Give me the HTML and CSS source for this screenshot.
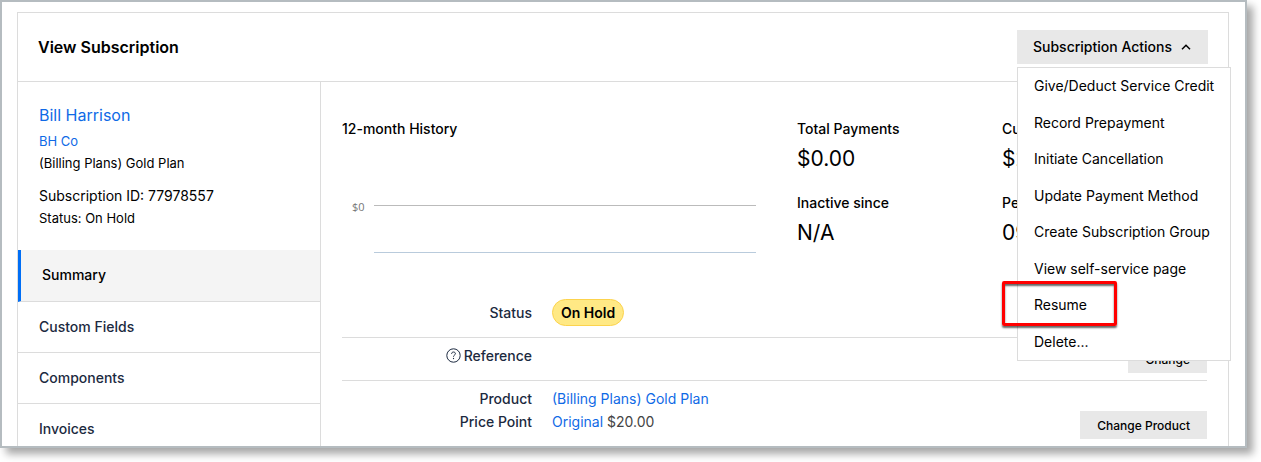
FILE: index.html
```
<!DOCTYPE html>
<html lang="en">
<head>
  <meta charset="UTF-8" />
  <meta name="viewport" content="width=device-width, initial-scale=1.0"/>
  <title>View Subscription</title>
  <link rel="stylesheet" href="styles.css">
</head>
<body>
  <div class="frame">
    <div class="panel">
      <header class="panel-header">
        <h1>View Subscription</h1>
        <div class="actions">
          <button type="button" class="actions-btn" aria-expanded="true">
            Subscription Actions
            <svg class="chevron" width="10" height="6" viewBox="0 0 10 6"><path d="M1 5.2 5 1.2 9 5.2" fill="none" stroke="#000" stroke-width="1.5"/></svg>
          </button>
          <ul class="actions-menu">
            <li><a href="#">Give/Deduct Service Credit</a></li>
            <li><a href="#">Record Prepayment</a></li>
            <li><a href="#">Initiate Cancellation</a></li>
            <li><a href="#">Update Payment Method</a></li>
            <li><a href="#">Create Subscription Group</a></li>
            <li><a href="#">View self-service page</a></li>
            <li class="highlighted"><a href="#">Resume</a></li>
            <li><a href="#">Delete...</a></li>
          </ul>
        </div>
      </header>

      <div class="panel-body">
        <aside class="sidebar">
          <div class="customer">
            <a href="#" class="customer-name">Bill Harrison</a>
            <a href="#">BH Co</a>
            <p>(Billing Plans) Gold Plan</p>
            <p class="subscription-id">Subscription ID: 77978557</p>
            <p>Status: On Hold</p>
          </div>
          <nav class="side-nav">
            <a href="#" class="active">Summary</a>
            <a href="#">Custom Fields</a>
            <a href="#">Components</a>
            <a href="#">Invoices</a>
          </nav>
        </aside>

        <main class="content">
          <!-- Overview -->
          <section class="overview">
            <div class="history">
              <h2>12-month History</h2>
              <div class="chart">
                <span class="axis-label">$0</span>
                <div class="plot"></div>
              </div>
            </div>
            <div class="metric">
              <h2>Total Payments</h2>
              <p>$0.00</p>
            </div>
            <div class="metric">
              <h2>Current MRR</h2>
              <p>$20.00</p>
            </div>
            <div class="metric">
              <h2>Inactive since</h2>
              <p>N/A</p>
            </div>
            <div class="metric">
              <h2>Period Ends</h2>
              <p>09/30</p>
            </div>
          </section>

          <!-- Details -->
          <section class="details">
            <div class="group status-group">
              <div class="row">
                <span class="label">Status</span>
                <span><span class="badge">On Hold</span></span>
              </div>
            </div>
            <div class="group">
              <div class="row">
                <span class="label">
                  <svg class="help" width="15" height="15" viewBox="0 0 15 15" fill="none" stroke="#1c2a40">
                    <circle cx="7.5" cy="7.5" r="6.7" stroke-width="1"/>
                    <path d="M5.6 5.9c0-1.2.8-1.9 1.9-1.9s1.9.7 1.9 1.7c0 1.4-1.9 1.4-1.9 3" stroke-width="1"/>
                    <path d="M7.5 9.9v1.2" stroke-width="1.1"/>
                  </svg>
                  Reference
                </span>
                <span></span>
                <button type="button" class="btn">Change</button>
              </div>
            </div>
            <div class="group">
              <div class="row">
                <span class="label">Product</span>
                <a href="#">(Billing Plans) Gold Plan</a>
              </div>
              <div class="row">
                <span class="label">Price Point</span>
                <span class="price"><a href="#">Original</a> $20.00</span>
                <button type="button" class="btn">Change Product</button>
              </div>
            </div>
          </section>
        </main>
      </div>
    </div>
  </div>
</body>
</html>
```

FILE: styles.css
```
*,
*::after {
  margin: 0;
  padding: 0;
  box-sizing: border-box;
}

body {
  min-height: 100vh;
  background: #fff;
  color: #000;
  font-family: Inter, "Liberation Sans", sans-serif;
  font-size: 14px;
  line-height: 22px;
}

a {
  color: #0f6ae6;
  text-decoration: none;
}

button {
  border: none;
  background: #e8e8e8;
  color: #000;
  font-family: inherit;
  font-weight: 500;
  cursor: pointer;
}

.frame {
  height: calc(100vh - 14px);
  margin-right: 14px;
  padding: 10px 16px 0 15px;
  border: 2px solid #b5bcc0;
  background: #fff;
  box-shadow: 6px 6px 8px rgba(0, 0, 0, 0.35);
  overflow: hidden;
}

.panel {
  border: 1px solid #dcdcdc;
}

/* Header */
.panel-header {
  display: flex;
  justify-content: space-between;
  align-items: center;
  padding: 17px 20px;
  border-bottom: 1px solid #dcdcdc;
}

h1 {
  font-size: 16px;
  font-weight: 600;
}

h2 {
  font-size: 14px;
  font-weight: 500;
  line-height: 20px;
}

.actions {
  position: relative;
}

.actions-btn {
  display: flex;
  align-items: center;
  gap: 9px;
  height: 34px;
  padding: 0 17px 0 16px;
  font-size: 14px;
  line-height: 22px;
}

.actions-menu {
  position: absolute;
  top: 37px;
  left: 0;
  z-index: 2;
  display: grid;
  width: 214px;
  min-height: 294px;
  border: 1px solid #dcdcdc;
  background: #fff;
  list-style: none;
}

.actions-menu li {
  display: flex;
  align-items: center;
  position: relative;
  padding: 0 16px;
}

.actions-menu a {
  color: #000;
  white-space: nowrap;
}

.highlighted::after {
  content: "";
  position: absolute;
  top: -6px;
  left: -16px;
  width: 115px;
  height: 45px;
  border: 3px solid #f00;
  border-radius: 2px;
  box-shadow: 0 2px 2px rgba(0, 0, 0, 0.6), inset 0 2px 2px rgba(0, 0, 0, 0.6);
  pointer-events: none;
}

.panel-body {
  display: flex;
}

/* Sidebar */
.sidebar {
  width: 303px;
  flex-shrink: 0;
  border-right: 1px solid #dcdcdc;
}

.customer {
  display: flex;
  flex-direction: column;
  align-items: flex-start;
  padding: 22px 21px 21px;
  font-size: 13px;
}

.customer-name {
  margin-bottom: 4px;
  font-size: 16px;
}

.subscription-id {
  margin-top: 11px;
  font-size: 14px;
}

.side-nav a {
  display: block;
  padding: 14px 21px;
  border-bottom: 1px solid #dcdcdc;
  color: #1c2a40;
  font-weight: 500;
}

.side-nav .active {
  border-left: 3px solid #006ef5;
  padding-bottom: 15px;
  background: #f4f4f4;
  color: #000;
}

/* Content */
.content {
  flex: 1;
  padding: 37px 21px 0;
}

.overview {
  display: grid;
  grid-template-columns: 1fr 205px 205px;
  grid-template-rows: 74px 99px;
}

.history {
  grid-row: span 2;
}

.chart {
  display: flex;
  gap: 8px;
  margin: 66px 41px 0 10px;
}

.axis-label {
  width: 14px;
  color: #777;
  font-family: "Open Sans", sans-serif;
  font-size: 11px;
  line-height: 4px;
}

.plot {
  flex: 1;
  height: 48px;
  border-top: 1px solid #bbb;
  border-bottom: 1px solid #b9cbdc;
}

.metric p {
  margin-top: 6px;
  font-size: 21px;
  line-height: 28px;
}

/* Details */
.group {
  padding: 7px 0;
  border-bottom: 1px solid #dcdcdc;
}

.status-group {
  padding-bottom: 11px;
}

.row {
  display: grid;
  grid-template-columns: 190px 1fr auto;
  column-gap: 20px;
}

.row + .row {
  margin-top: 1px;
}

.label {
  display: flex;
  align-items: flex-start;
  justify-content: flex-end;
  gap: 3px;
  color: #1c2a40;
  font-weight: 500;
}

.help {
  margin-top: 3px;
}

.badge {
  display: inline-block;
  padding: 1px 8px;
  border: 1px solid #fcd34d;
  border-radius: 14px;
  background: #ffe985;
  font-weight: 600;
  line-height: 23px;
}

.status-group .label {
  align-items: center;
}

.price {
  color: #444;
}

.btn {
  height: 28px;
  padding: 0 17px;
  font-size: 12px;
}
```
